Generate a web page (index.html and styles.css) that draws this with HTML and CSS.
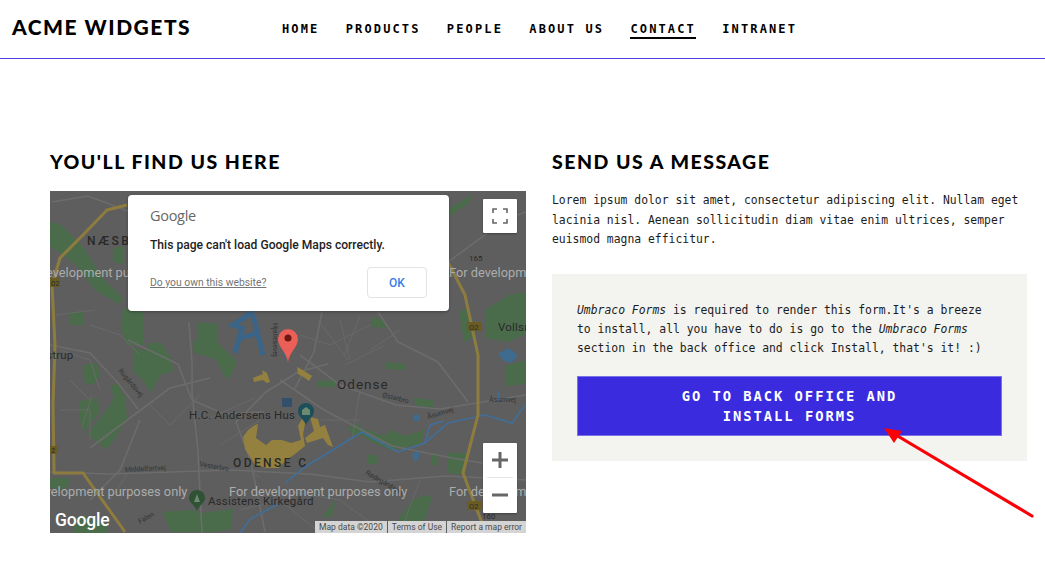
FILE: index.html
```html
<!DOCTYPE html>
<html lang="en">
<head>
<meta charset="utf-8">
<title>Contact - Acme Widgets</title>
<link rel="stylesheet" href="styles.css">
</head>
<body>
<header class="site-header">
  <a class="logo">ACME WIDGETS</a>
  <nav class="nav">
    <a class="nav-link">HOME</a>
    <a class="nav-link">PRODUCTS</a>
    <a class="nav-link">PEOPLE</a>
    <a class="nav-link">ABOUT US</a>
    <a class="nav-link is-active">CONTACT</a>
    <a class="nav-link">INTRANET</a>
  </nav>
</header>
<main class="content">
  <section class="col">
    <h2 class="heading">YOU'LL FIND US HERE</h2>
    <div class="map">
      <svg class="map-art" viewBox="50 191 476 342" aria-hidden="true">
        <rect class="land" x="50" y="191" width="476" height="342"/>
        <g class="green">
          <path d="M50 222l10 2 24 24 18 30 21 20-4 6-24-14-20-26-25-18z"/>
          <path d="M113 248l10-2v18l-10-2z"/>
          <path d="M70 312h13v13H70z"/>
          <path d="M123 308l20 4 0 33h-16l-6-16z"/>
          <path d="M197 322l20 2 0 21h-20z"/>
          <path d="M83 365l14-2 3 14-6 7h-9z"/>
          <path d="M80 401l17-3 3 14-16 20-4-10z"/>
          <path d="M87 434l24-30 4-11 10 2 2 25-20 30z"/>
          <path d="M110 386l9-3 4 13-10-1z"/>
          <path d="M133 347l13 4 2-8h14l10 18 1 10-13 4-6 12-3 6-9-14-9-8z"/>
          <path d="M193 340h22l22 22-8 18-6-6-6-14-24-8z"/>
          <path d="M163 512l30-2 8 3 32-4-2 20-16 3h-44z"/>
          <path d="M73 518l12-2 22 8v9H73z"/>
          <path d="M50 478h20l-4 12-16-2z"/>
          <path d="M372 318l12 1 1 9-13-1z"/>
          <path d="M385 362l20 2v6l-20-1z"/>
          <path d="M318 381l17-1v7h-17z"/>
          <path d="M413 398l20 2 0 7-16-1z"/>
          <path d="M348 428l8-6 6 6 22 8 8-6 12 6 21-6-4 14-30 6-20-8-8-6-10-1z"/>
          <path d="M368 455h9v9h-9z"/>
          <path d="M432 455h6v10h-6z"/>
          <path d="M448 453h18l-2 22-16-2z"/>
          <path d="M392 533l8-16 12-16 12-6 8 2-6 20-12 16z"/>
          <path d="M485 310l24-15 17-3v42l-18 8-22-4z"/>
          <path d="M450 208l22-13-3 8-19 13z"/>
          <path d="M487 228l28-16-3 10-24 12z"/>
          <path d="M505 366l21-6v24l-20 2z"/>
          <path d="M459 312l9-4 8 28-12 6z"/>
          <path d="M322 517l14-18-4 18z"/>
        </g>
        <g class="road">
          <path d="M50 472l60 2 120-4 80 4 60 8 76-6 80 4"/>
          <path d="M128 340l50 24 14 36 32 14 40-2"/>
          <path d="M189 322l3 40 0 30 6 60 4 81"/>
          <path d="M265 532l-14-70-15-40 30-30 32-20 30-8"/>
          <path d="M300 355l40 30 56 20 44 4 86-14"/>
          <path d="M280 380l44 30 68 36 60 12 60 10"/>
          <path d="M322 312l-8 40-20 38"/>
          <path d="M378 312l20 30 40 20 30 40"/>
          <path d="M448 262l60-44 18-6"/>
          <path d="M90 448l40-30 40-30 40-10"/>
          <path d="M50 345l40 8 28 30 20 26"/>
          <path d="M52 202l36-6 40 15"/>
          <path d="M140 420l-20 50 -30 30"/>
        </g>
        <g class="road-thin">
          <path d="M60 410h30v30M70 380l20 20M92 396l-10 30M150 405l20 20 30-30M205 420l50-22M220 445l40-25M240 462l20 16M320 420h40M360 390l-8 50M130 470l-20 30M420 480l-20 53M280 490l60 10 40 30M240 510l40-10 40 33M300 335l30 10 40-20M318 320l30 40M340 320l10 40M360 316l-16 40M385 345l-40 20M400 330l-30 20M60 350l30 10 10 30M90 325l30 10 20 20M55 315l40-5"/>
        </g>
        <g class="water">
          <path class="river" d="M285 483l20-16 57-35 36 20 27-9 23-20 37-8 27 8 13-18"/>
          <path class="river" d="M425 443l5-18 14-4M240 533l10-14 30-16"/>
          <path class="canal" d="M253 312l-20 13 9 3-7 25M253 315l10 40M242 338l15-5"/>
          <path d="M414 415h6v6h-6zM412 454l8-3-2 9-4 1zM498 354l10-6 10 7-6 8-8-2zM497 391h3v8h-3zM283 352l4 2-2 3z"/>
        </g>
        <g class="gold">
          <path d="M253 378l10-4-1-4 5 3 3 9-3 1-4-3-9 2z"/>
          <path d="M297 367l4 2 8 5 3 2-3 5-4-3-7-4z"/>
          <path d="M248 430l7-5 3-1-2 14 10 7 6-5 10 0 9 3 10-3-3-14 7-13 2 1-4 20 2 12-10 8-10 7-6 7-12 0-12-3-10-16-2-12z"/>
          <path d="M310 417l8 2 2 8 5-2 8 22-5-2-5-7-16 5-2-5 9-7z"/>
        </g>
        <g class="highway">
          <path d="M127 205l-20 5-24 25-23 23-8 27 3 60-2 60 1 62 0 6h29l42 59"/>
          <path d="M448 262l17 33 13 60v60l-15 58 19 50 12 10"/>
        </g>
        <g class="shield">
          <rect x="50" y="278" width="10" height="9"/>
          <rect x="50" y="446" width="8" height="8"/>
          <rect x="467" y="322" width="15" height="9"/>
          <rect x="467" y="501" width="15" height="9"/>
        </g>
        <g class="shield-text">
          <text x="51" y="286">02</text>
          <text x="51" y="453">2</text>
          <text x="469" y="330">O2</text>
          <text x="469" y="509">O2</text>
        </g>
        <g class="route-text">
          <text x="469" y="261">165</text>
          <text x="482" y="519">160</text>
        </g>
        <g class="street">
          <text transform="translate(118 371) rotate(50)">Rugårdsvej</text>
          <text transform="translate(125 472) rotate(-3)">Middelfartvej</text>
          <text transform="translate(199 466) rotate(10)">Vesterbro</text>
          <text transform="translate(382 397) rotate(14)">Østerbro</text>
          <text transform="translate(428 419) rotate(-16)">Åsumvej</text>
          <text x="489" y="402">Åsumvej</text>
          <text transform="translate(365 474) rotate(30)">Rødegårdsvej</text>
          <text transform="translate(140 524) rotate(-30)">Falen</text>
          <text transform="translate(273 323) rotate(90)">Hjallesevej</text>
        </g>
        <text class="place place-spaced" x="87" y="245">NÆSBY</text>
        <text class="place place-spaced" x="233" y="467">ODENSE C</text>
        <text class="place city" x="337" y="389">Odense</text>
        <text class="place poi-label" x="189" y="419">H.C. Andersens Hus</text>
        <text class="place poi-label" x="208" y="505">Assistens Kirkegård</text>
        <text class="place poi-label" x="498" y="331">Vollsmose</text>
        <text class="place poi-label" x="28" y="359">Højstrup</text>
        <g class="watermark">
          <text x="17" y="277">For development purposes only</text>
          <text x="449" y="277">For development purposes only</text>
          <text x="9" y="496">For development purposes only</text>
          <text x="229" y="496">For development purposes only</text>
          <text x="449" y="496">For development purposes only</text>
        </g>
        <path class="poi-teal" d="M306 425c-2-6-8-8-8-14a8 8 0 0 1 16 0c0 6-6 8-8 14z"/>
        <path class="poi-green" d="M197 511c-2-6-8-8-8-13a8 8 0 0 1 16 0c0 5-6 7-8 13z"/>
        <path class="poi-mark" d="M302 415v-5l4-3 4 3v5zM194 502l3-8 3 8z"/>
        <rect class="poi-transit" x="282" y="398" width="10" height="9" rx="1"/>
        <path class="pin" d="M288 362c-2-11-10-15-10-23a10 10 0 0 1 20 0c0 8-8 12-10 23z"/>
        <circle class="pin-dot" cx="288" cy="338" r="3.5"/>
        <text class="map-logo" x="55" y="526">Google</text>
      </svg>

      <div class="dialog">
        <div class="dialog-logo">Google</div>
        <p class="dialog-msg">This page can't load Google Maps correctly.</p>
        <div class="dialog-foot">
          <a class="dialog-link">Do you own this website?</a>
          <button class="dialog-ok">OK</button>
        </div>
      </div>

      <button class="map-btn fullscreen" aria-label="Fullscreen">
        <svg class="map-icon" viewBox="0 0 16 16"><path d="M1 5V1h4M11 1h4v4M15 11v4h-4M5 15H1v-4"/></svg>
      </button>
      <div class="zoom-ctl">
        <button class="zoom-btn" aria-label="Zoom in"><svg class="zoom-icon" viewBox="0 0 16 16"><path d="M0 8h16M8 0v16"/></svg></button>
        <span class="zoom-sep"></span>
        <button class="zoom-btn" aria-label="Zoom out"><svg class="zoom-icon" viewBox="0 0 16 16"><path d="M0 8h16"/></svg></button>
      </div>
      <div class="attrib">
        <span class="attrib-item">Map data ©2020</span>
        <span class="attrib-item">Terms of Use</span>
        <span class="attrib-item">Report a map error</span>
      </div>
    </div>
  </section>

  <section class="col">
    <h2 class="heading">SEND US A MESSAGE</h2>
    <p class="lede">Lorem ipsum dolor sit amet, consectetur adipiscing elit. Nullam eget lacinia nisl. Aenean sollicitudin diam vitae enim ultrices, semper euismod magna efficitur.</p>
    <div class="notice">
      <p class="notice-text"><em>Umbraco Forms</em> is required to render this form.It's a breeze to install, all you have to do is go to the <em>Umbraco Forms</em> section in the back office and click Install, that's it! :)</p>
      <a class="cta">GO TO BACK OFFICE AND<br>INSTALL FORMS</a>
    </div>
  </section>
</main>
<svg class="annotation" viewBox="0 0 1045 571" aria-hidden="true">
  <path class="arrow-line" d="M1032 516L896 435"/>
  <path class="arrow-head" d="M884 428l18 3-8 12z"/>
</svg>
</body>
</html>
```
FILE: styles.css
```css
* { box-sizing: border-box; }
html, body { margin: 0; padding: 0; }
body {
  position: relative;
  width: 1045px;
  height: 571px;
  overflow: hidden;
  background: #fff;
  color: #1c1c1c;
  font-family: "DejaVu Sans Mono", "Liberation Mono", monospace;
}

.site-header {
  display: flex;
  align-items: center;
  height: 59px;
  padding: 0 0 3px 12px;
  border-bottom: 1px solid #4f3fe6;
}
.logo {
  width: 270px;
  padding-bottom: 2px;
  font: 900 21px/1 Lato, sans-serif;
  letter-spacing: 1.5px;
  color: #000;
}
.nav { display: flex; gap: 26.3px; margin-top: 2px; }
.nav-link {
  padding: 4px 0 1px;
  border-bottom: 2px solid transparent;
  font: 700 12px/14px "DejaVu Sans Mono", monospace;
  letter-spacing: 2.13px;
  color: #000;
  white-space: nowrap;
}
.nav-link.is-active { border-bottom-color: #000; }

.content {
  display: grid;
  grid-template-columns: 476px 475px;
  gap: 26px;
  padding: 91px 0 0 50px;
}
.heading {
  margin: 0 0 17px;
  height: 24px;
  font: 900 19.5px/24px Lato, sans-serif;
  letter-spacing: 1.5px;
  color: #000;
}

.map {
  position: relative;
  width: 476px;
  height: 342px;
  overflow: hidden;
  background: #5e5e5e;
}
.map-art { display: block; width: 476px; height: 342px; font-family: Roboto, sans-serif; }
.land { fill: #5e5e5e; }
.green path { fill: #4a6c4b; }
.road path { fill: none; stroke: #6c6c6c; stroke-width: 1.6; }
.road-thin path { fill: none; stroke: #696969; stroke-width: 1; }
.water path { fill: #3f6b8f; }
.water .river { fill: none; stroke: #3f6f9a; stroke-width: 1.6; }
.water .canal { fill: none; stroke: #3a6488; stroke-width: 5; }
.gold path { fill: #94803f; }
.highway path { fill: none; stroke: #8e7c3e; stroke-width: 3; stroke-linejoin: round; }
.shield rect { fill: #6a5c23; }
.shield-text text { font-size: 7.5px; fill: #2c2c2c; }
.route-text text { font-size: 8px; fill: #2b2b2b; }
.street text { font-size: 7px; fill: #343434; }
.place { fill: #292929; }
.place-spaced { font-size: 12px; font-weight: 500; letter-spacing: 2.4px; }
.city { font-size: 13.5px; letter-spacing: 1px; }
.poi-label { font-size: 11.5px; letter-spacing: .2px; }
.watermark text { font-size: 12.8px; fill: #acacac; }
.poi-teal { fill: #1d4f5a; }
.poi-green { fill: #2f5234; }
.poi-mark { fill: #6b8a70; }
.poi-transit { fill: #32506c; }
.pin { fill: #ea5f57; }
.pin-dot { fill: #6e1610; }
.map-logo { font-size: 17.5px; font-weight: 500; fill: #fff; letter-spacing: -.2px; }

.dialog {
  position: absolute;
  left: 78px;
  top: 4px;
  display: flex;
  flex-direction: column;
  width: 321px;
  height: 116px;
  padding: 12px 22px 0;
  border-radius: 4px;
  background: #fff;
  box-shadow: 0 1px 3px rgba(0, 0, 0, .3);
  font-family: Roboto, sans-serif;
}
.dialog-logo {
  height: 18px;
  font: 400 14.5px/18px "Open Sans", sans-serif;
  letter-spacing: -.3px;
  color: #676767;
}
.dialog-msg {
  margin: 12px 0 0;
  font-size: 12.1px;
  font-weight: 500;
  line-height: 16px;
  color: #222;
}
.dialog-foot {
  display: flex;
  align-items: center;
  justify-content: space-between;
  margin-top: 14px;
}
.dialog-link { font-size: 10.35px; color: #757575; text-decoration: underline; }
.dialog-ok {
  width: 60px;
  height: 31px;
  padding: 0;
  border: 1px solid #e3e3e6;
  border-radius: 4px;
  background: #fff;
  color: #3b7de8;
  font: 500 12px Roboto, sans-serif;
}

.map-btn, .zoom-ctl {
  position: absolute;
  left: 433px;
  width: 34px;
  border-radius: 1px;
  background: #fff;
  box-shadow: 0 1px 2px rgba(0, 0, 0, .3);
}
.map-btn {
  top: 8px;
  height: 34px;
  display: flex;
  align-items: center;
  justify-content: center;
  padding: 0;
  border: 0;
}
.map-icon { width: 16px; height: 16px; fill: none; stroke: #666; stroke-width: 1.6; }
.zoom-ctl { top: 252px; display: flex; flex-direction: column; height: 70px; }
.zoom-btn {
  display: flex;
  align-items: center;
  justify-content: center;
  height: 34px;
  padding: 0;
  border: 0;
  background: transparent;
}
.zoom-icon { width: 16px; height: 16px; fill: none; stroke: #666; stroke-width: 3; }
.zoom-sep { height: 1px; margin: 0 4px; background: #e6e6e6; }

.attrib {
  position: absolute;
  right: 0;
  bottom: 0;
  display: flex;
  gap: 1px;
  height: 12px;
  font: 8.5px/13px Roboto, sans-serif;
  color: #4a4a4a;
}
.attrib-item { padding: 0 4px; background: #d4d4d4; white-space: nowrap; }

.lede {
  margin: 2px 0 24px;
  font-size: 11.4px;
  line-height: 19.5px;
}
.notice {
  height: 187px;
  padding: 27px 25px 0;
  background: #f3f3ef;
}
.notice-text { margin: 0 0 18px; font-size: 11.4px; line-height: 19px; }
.cta {
  display: block;
  width: 425px;
  height: 60px;
  padding: 9px 0;
  border: 1px solid #7c72e8;
  background: #3a2bdf;
  color: #fff;
  font-size: 13.8px;
  font-weight: 700;
  line-height: 20px;
  letter-spacing: 1.95px;
  text-align: center;
}

.annotation {
  position: absolute;
  left: 0;
  top: 0;
  width: 1045px;
  height: 571px;
  pointer-events: none;
}
.arrow-line { fill: none; stroke: #fb0007; stroke-width: 3.2; stroke-linecap: round; }
.arrow-head { fill: #fb0007; }
```
